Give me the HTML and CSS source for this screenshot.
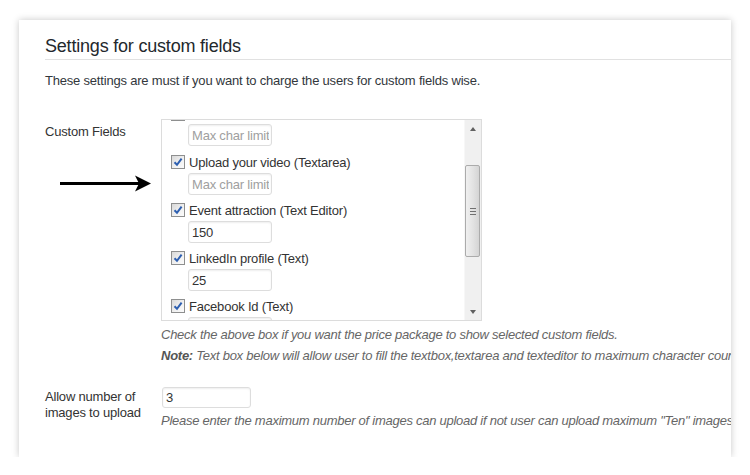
FILE: index.html
```html
<!DOCTYPE html>
<html lang="en">
<head>
<meta charset="utf-8">
<title>Settings for custom fields</title>
<link rel="stylesheet" href="styles.css">
</head>
<body>
<div class="card">
  <h2 class="title">Settings for custom fields</h2>
  <p class="intro">These settings are must if you want to charge the users for custom fields wise.</p>

  <div class="row row-fields">
    <div class="label">Custom Fields</div>
    <div class="field">
      <div class="listbox">
        <div class="list">
          <div class="item item-first">
            <label class="item-head"><span class="cb"></span><span>About the Event</span></label>
            <input class="txt" type="text" placeholder="Max char limit">
          </div>
          <div class="item">
            <label class="item-head"><span class="cb checked"><svg viewBox="0 0 12 12" width="12" height="12"><path d="M2.5 6.2 L5 8.8 L9.6 2.6" fill="none" stroke="#2d5fb0" stroke-width="2"/></svg></span><span>Upload your video (Textarea)</span></label>
            <input class="txt" type="text" placeholder="Max char limit">
          </div>
          <div class="item">
            <label class="item-head"><span class="cb checked"><svg viewBox="0 0 12 12" width="12" height="12"><path d="M2.5 6.2 L5 8.8 L9.6 2.6" fill="none" stroke="#2d5fb0" stroke-width="2"/></svg></span><span>Event attraction (Text Editor)</span></label>
            <input class="txt" type="text" value="150">
          </div>
          <div class="item">
            <label class="item-head"><span class="cb checked"><svg viewBox="0 0 12 12" width="12" height="12"><path d="M2.5 6.2 L5 8.8 L9.6 2.6" fill="none" stroke="#2d5fb0" stroke-width="2"/></svg></span><span>LinkedIn profile (Text)</span></label>
            <input class="txt" type="text" value="25">
          </div>
          <div class="item">
            <label class="item-head"><span class="cb checked"><svg viewBox="0 0 12 12" width="12" height="12"><path d="M2.5 6.2 L5 8.8 L9.6 2.6" fill="none" stroke="#2d5fb0" stroke-width="2"/></svg></span><span>Facebook Id (Text)</span></label>
            <input class="txt" type="text" value="">
          </div>
        </div>
        <div class="scrollbar">
          <div class="sb-btn"><span class="tri-up"></span></div>
          <div class="sb-track">
            <div class="sb-thumb"><span class="grip"></span></div>
          </div>
          <div class="sb-btn"><span class="tri-down"></span></div>
        </div>
      </div>
      <p class="help help-first">Check the above box if you want the price package to show selected custom fields.</p>
      <p class="help"><strong>Note:</strong> Text box below will allow user to fill the textbox,textarea and texteditor to maximum character count.</p>
    </div>
  </div>

  <div class="row row-images">
    <div class="label label-images">Allow number of images to upload</div>
    <div class="field">
      <input class="txt txt-num" type="text" value="3">
      <p class="help help-num">Please enter the maximum number of images can upload if not user can upload maximum "Ten" images.</p>
    </div>
  </div>

  <svg class="arrow" viewBox="0 0 91 18" width="91" height="18">
    <line x1="0" y1="8.5" x2="80" y2="8.5" stroke="#000" stroke-width="3"/>
    <path d="M75 0.5 L91 8.5 L75 16.5 L79 8.5 Z" fill="#000"/>
  </svg>
</div>
</body>
</html>
```
FILE: styles.css
```css
* { box-sizing: border-box; }

body {
  margin: 0;
  padding: 20px 19px 0;
  background: #fff;
  font-family: "Liberation Sans", Arial, sans-serif;
  font-size: 13px;
  letter-spacing: -0.2px;
  color: #333;
}

.card {
  position: relative;
  width: 712px;
  height: 437px;
  padding: 14px 0 0 26px;
  background: #fff;
  box-shadow: 0 0 7px rgba(0, 0, 0, 0.22);
  overflow: hidden;
}

.title {
  margin: 0;
  font-size: 18px;
  letter-spacing: -0.2px;
  font-weight: normal;
  line-height: 24px;
  color: #23282d;
  padding-bottom: 1px;
  border-bottom: 1px solid #e1e1e1;
}

.intro {
  margin: 12px 0 0;
  line-height: 17px;
  color: #32373c;
}

.row { display: flex; }
.row-fields { margin-top: 30px; }
.row-images { margin-top: 21px; }

.label {
  width: 116px;
  flex: none;
  line-height: 17px;
  padding-top: 4px;
  color: #333;
}
.label-images {
  line-height: 16px;
  padding-top: 2px;
  padding-right: 14px;
}

.field { flex: none; }

.listbox {
  display: flex;
  width: 321px;
  height: 202px;
  border: 1px solid #dcdcdc;
  background: #fff;
}

.list {
  flex: 1;
  overflow: hidden;
  padding-left: 9px;
}

.item-first { margin-top: -13px; }
.item-first .txt { margin-top: 3px; margin-bottom: 9px; }

.item-head {
  display: flex;
  align-items: center;
  gap: 4px;
  height: 14px;
  white-space: nowrap;
  color: #333;
}

.cb {
  width: 14px;
  height: 14px;
  flex: none;
  border: 1px solid #8e8f8f;
  background: linear-gradient(135deg, #d8d8d8 0%, #f2f2f2 60%, #fbfbfb 100%);
  display: flex;
  align-items: center;
  justify-content: center;
}
.cb svg { display: block; }

.txt {
  display: block;
  height: 22px;
  width: 84px;
  margin: 4px 0 8px 17px;
  padding: 0 2px 0 3px;
  border: 1px solid #dddddd;
  border-radius: 3px;
  box-shadow: inset 0 1px 2px rgba(0, 0, 0, 0.07);
  font-family: "Liberation Sans", Arial, sans-serif;
  font-size: 13px;
  letter-spacing: -0.2px;
  color: #333;
  background: #fff;
  outline: none;
}
.txt::placeholder { color: #a0a0a0; }

.txt-num {
  width: 89px;
  height: 21px;
  margin: 0 0 0 1px;
}

.scrollbar {
  width: 17px;
  flex: none;
  display: flex;
  flex-direction: column;
  background: #f0f0f0;
  border-left: 1px solid #f7f7f7;
}
.sb-btn {
  height: 17px;
  display: flex;
  align-items: center;
  justify-content: center;
}
.tri-up {
  width: 0; height: 0;
  border-left: 3.5px solid transparent;
  border-right: 3.5px solid transparent;
  border-bottom: 4px solid #606060;
}
.tri-down {
  width: 0; height: 0;
  border-left: 3.5px solid transparent;
  border-right: 3.5px solid transparent;
  border-top: 4px solid #606060;
}
.sb-track { flex: 1; padding: 0 1px 0 0; }
.sb-thumb {
  margin-top: 28px;
  height: 92px;
  border: 1px solid #ababab;
  border-radius: 2px;
  background: linear-gradient(90deg, #f0f0f0 0%, #e2e2e2 55%, #d4d4d4 100%);
  display: flex;
  align-items: center;
  justify-content: center;
}
.grip {
  width: 6px;
  height: 7px;
  background: repeating-linear-gradient(180deg, #707070 0, #707070 1px, transparent 1px, transparent 3px);
}

.help {
  margin: 0;
  line-height: 21px;
  font-style: italic;
  letter-spacing: -0.26px;
  color: #666;
  white-space: nowrap;
}
.help strong { font-weight: bold; color: #555; }
.help-first { margin-top: 3px; }
.help-num { margin-top: 2px; }

.arrow {
  position: absolute;
  left: 41px;
  top: 155px;
}
```
